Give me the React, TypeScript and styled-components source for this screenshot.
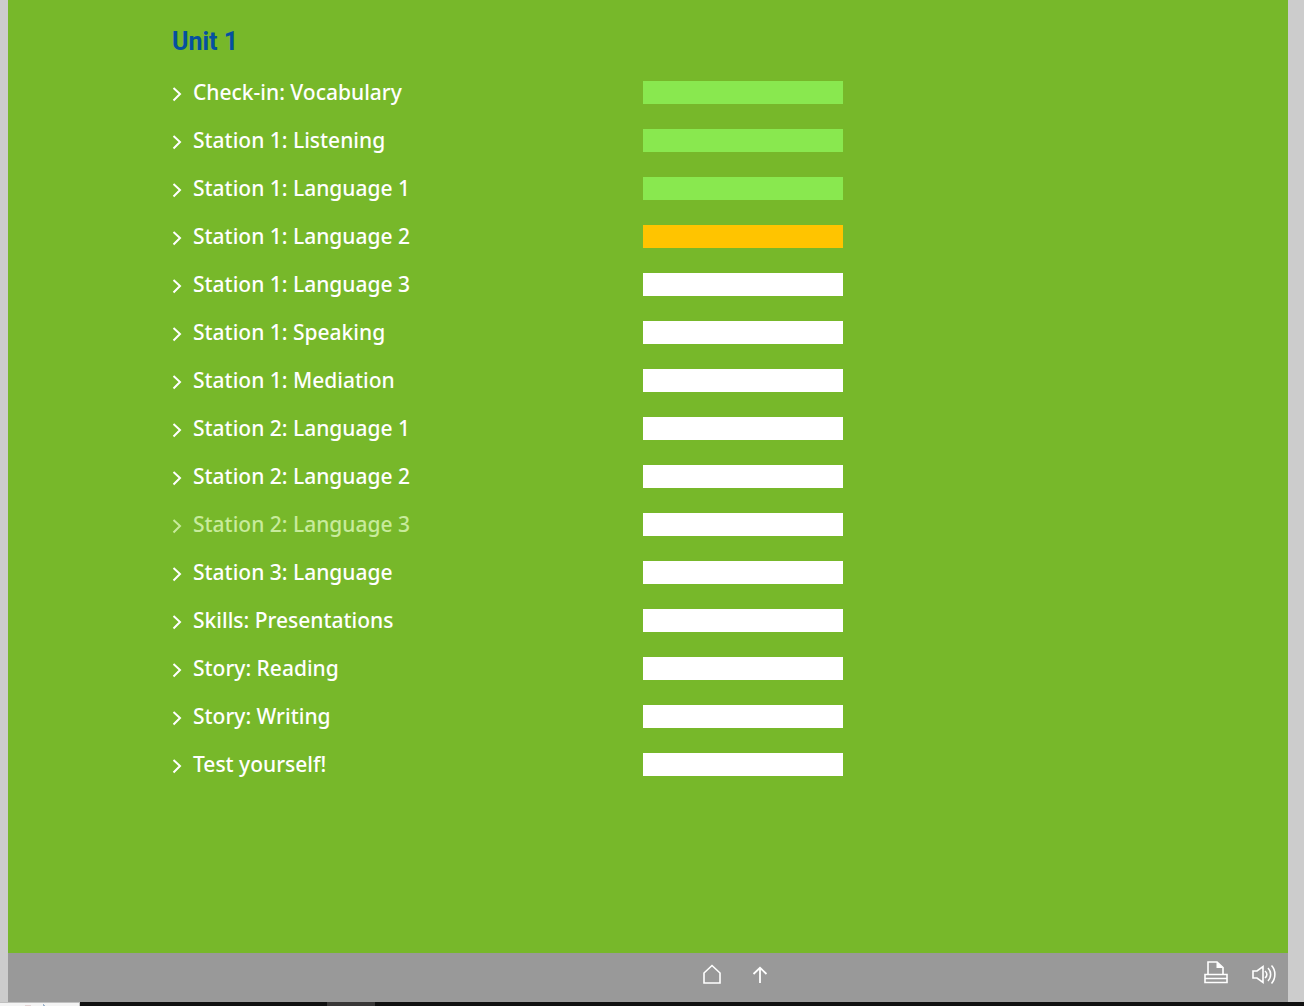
import React from 'react';
import styled, { createGlobalStyle } from 'styled-components';

type Status = 'done' | 'partial' | 'open';

interface Exercise {
  title: string;
  status: Status;
  visited?: boolean;
}

const exercises: Exercise[] = [
  { title: 'Check-in: Vocabulary', status: 'done' },
  { title: 'Station 1: Listening', status: 'done' },
  { title: 'Station 1: Language 1', status: 'done' },
  { title: 'Station 1: Language 2', status: 'partial' },
  { title: 'Station 1: Language 3', status: 'open' },
  { title: 'Station 1: Speaking', status: 'open' },
  { title: 'Station 1: Mediation', status: 'open' },
  { title: 'Station 2: Language 1', status: 'open' },
  { title: 'Station 2: Language 2', status: 'open' },
  { title: 'Station 2: Language 3', status: 'open', visited: true },
  { title: 'Station 3: Language', status: 'open' },
  { title: 'Skills: Presentations', status: 'open' },
  { title: 'Story: Reading', status: 'open' },
  { title: 'Story: Writing', status: 'open' },
  { title: 'Test yourself!', status: 'open' },
];

const barColors: Record<Status, string> = {
  done: '#89e84f',
  partial: '#ffc400',
  open: '#ffffff',
};

const GlobalStyle = createGlobalStyle`
  *, *::before, *::after { box-sizing: border-box; }
  body {
    margin: 0;
    background: #cccccc;
    font-family: 'Noto Sans', 'Open Sans', sans-serif;
  }
`;

const Page = styled.div`
  display: flex;
  flex-direction: column;
  min-height: 100vh;
`;

const Frame = styled.div`
  flex: 1;
  display: flex;
  flex-direction: column;
  margin: 0 16px 0 8px;
`;

const Board = styled.main`
  flex: 1;
  background: #77b82a;
`;

const Content = styled.div`
  max-width: 960px;
  margin: 0 auto;
  padding: 24px 4px;
`;

const Title = styled.h1`
  margin: 0;
  font-family: Roboto, 'Noto Sans', sans-serif;
  font-size: 25px;
  line-height: 36px;
  font-weight: 700;
  color: #0450a0;
`;

const List = styled.ul`
  margin: 8px 0 0;
  padding: 0;
  list-style: none;
`;

const Row = styled.li`
  display: grid;
  grid-template-columns: 471px 200px;
  align-items: center;
  height: 48px;
`;

const ExerciseLink = styled.a<{ $dim?: boolean }>`
  justify-self: start;
  display: flex;
  align-items: center;
  gap: 11px;
  color: ${(p) => (p.$dim ? '#c8eb9c' : '#ffffff')};
  font-size: 21px;
  line-height: 32px;
  font-weight: 500;
  text-decoration: none;
`;

const Chevron = styled.svg`
  width: 10px;
  height: 16px;
  margin-top: 4px;
`;

const Bar = styled.div<{ $status: Status }>`
  height: 23px;
  background: ${(p) => barColors[p.$status]};
`;

const Toolbar = styled.footer`
  display: grid;
  grid-template-columns: 1fr auto 1fr;
  align-items: center;
  height: 49px;
  padding: 0 12px 7px;
  background: #999999;
`;

const Group = styled.div`
  display: flex;
  gap: 24px;
  padding-left: 176px;
`;

const Tools = styled.div`
  display: flex;
  justify-content: flex-end;
  gap: 24px;
`;

const IconButton = styled.button`
  display: flex;
  width: 24px;
  height: 24px;
  padding: 0;
  border: 0;
  background: none;
  color: #ffffff;
`;

const Icon = styled.svg`
  width: 24px;
  height: 24px;
  overflow: visible;
`;

const Taskbar = styled.div`
  display: flex;
  height: 4px;
  background: #101010;
`;

const SearchField = styled.div`
  width: 80px;
  margin-right: 247px;
  border-top: 1px solid #c0c0c0;
  border-right: 1px solid #c0c0c0;
  background: #f4f4f4;
`;

const SearchMarks = styled.svg`
  display: block;
  width: 79px;
  height: 3px;
`;

const ActiveTask = styled.div`
  width: 48px;
  background: #383636;
`;

const stroke = { fill: 'none', stroke: 'currentColor', strokeWidth: 2 };

export default function App() {
  return (
    <Page>
      <GlobalStyle />
      <Frame>
        <Board>
          <Content>
            <Title>Unit 1</Title>
            <List>
              {exercises.map((e) => (
                <Row key={e.title}>
                  <ExerciseLink href="#" $dim={e.visited}>
                    <Chevron viewBox="0 0 10 16" aria-hidden="true">
                      <path d="M1.500 2 8 8 1.500 14.500" {...stroke} />
                    </Chevron>
                    {e.title}
                  </ExerciseLink>
                  <Bar $status={e.status} />
                </Row>
              ))}
            </List>
          </Content>
        </Board>
        <Toolbar>
          <span />
          <Group>
            <IconButton aria-label="Home">
              <Icon viewBox="0 0 24 24">
                <path d="M4 21V11L12 3.500l8 7.500V21z" {...stroke} strokeWidth={1.6} />
              </Icon>
            </IconButton>
            <IconButton aria-label="Up">
              <Icon viewBox="0 0 24 24">
                <path d="M12 21V6M5.500 12 12 5.800l6.500 6.200" {...stroke} strokeWidth={1.8} />
              </Icon>
            </IconButton>
          </Group>
          <Tools>
            <IconButton aria-label="Print">
              <Icon viewBox="0 0 24 24">
                <path d="M4 12V0h9l6 5.500V12" {...stroke} strokeWidth={1.6} />
                <path d="M1 12.500h22v8H1zM1 16.500h22" {...stroke} strokeWidth={1.6} />
                <path d="M12.500 0v6H19z" fill="currentColor" />
              </Icon>
            </IconButton>
            <IconButton aria-label="Sound">
              <Icon viewBox="0 0 24 24">
                <path d="M1 9h4l6-4.500v16L5 16H1zM13 9c2.500 2 2.500 5 0 7M16 6c3.500 3.500 3.500 9.500 0 13M19.500 3.500c4.500 4.500 4.500 13 0 18" {...stroke} strokeWidth={1.6} />
              </Icon>
            </IconButton>
          </Tools>
        </Toolbar>
      </Frame>
      <Taskbar>
        <SearchField>
          <SearchMarks viewBox="0 0 79 3" aria-hidden="true">
            <rect x="25" y="2" width="6" height="1" fill="#e3d3d3" />
            <rect x="43" y="1" width="1" height="2" fill="#9db4cc" />
            <rect x="44" y="2" width="1" height="1" fill="#9db4cc" />
          </SearchMarks>
        </SearchField>
        <ActiveTask />
      </Taskbar>
    </Page>
  );
}
